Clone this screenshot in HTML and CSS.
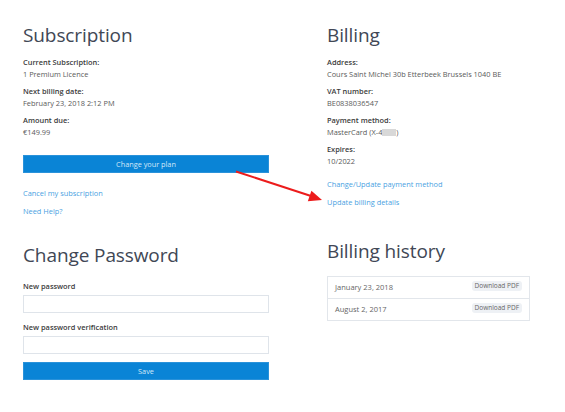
FILE: index.html
```html
<!DOCTYPE html>
<html lang="en">
<head>
    <meta charset="UTF-8">
    <meta name="viewport" content="width=device-width, initial-scale=1.0">
    <title>Account</title>
    <link rel="stylesheet" href="styles.css">
</head>
<body>

<div class="page">
    <div class="col col-left">
        <!-- Subscription -->
        <section class="block">
            <h2>Subscription</h2>
            <dl class="info">
                <div class="group">
                    <dt>Current Subscription:</dt>
                    <dd>1 Premium Licence</dd>
                </div>
                <div class="group">
                    <dt>Next billing date:</dt>
                    <dd>February 23, 2018 2:12 PM</dd>
                </div>
                <div class="group">
                    <dt>Amount due:</dt>
                    <dd>€149.99</dd>
                </div>
            </dl>
            <button class="btn btn-plan">Change your plan</button>
            <a href="#" class="link link-first">Cancel my subscription</a>
            <a href="#" class="link">Need Help?</a>
        </section>

        <!-- Change Password -->
        <section class="block password">
            <h2>Change Password</h2>
            <label for="newPassword" class="field-label">New password</label>
            <input type="password" id="newPassword" class="field">
            <label for="newPasswordCheck" class="field-label second">New password verification</label>
            <input type="password" id="newPasswordCheck" class="field">
            <button class="btn btn-save">Save</button>
        </section>
    </div>

    <div class="col col-right">
        <!-- Billing -->
        <section class="block">
            <h2>Billing</h2>
            <dl class="info">
                <div class="group">
                    <dt>Address:</dt>
                    <dd>Cours Saint Michel 30b Etterbeek Brussels 1040 BE</dd>
                </div>
                <div class="group">
                    <dt>VAT number:</dt>
                    <dd>BE0838036547</dd>
                </div>
                <div class="group">
                    <dt>Payment method:</dt>
                    <dd>MasterCard (X-4<span class="masked"></span>)</dd>
                </div>
                <div class="group">
                    <dt>Expires:</dt>
                    <dd>10/2022</dd>
                </div>
            </dl>
            <a href="#" class="link link-billing">Change/Update payment method</a>
            <a href="#" class="link">Update billing details</a>
        </section>

        <!-- Billing history -->
        <section class="block history">
            <h2>Billing history</h2>
            <div class="history-table">
                <div class="history-row">
                    <span>January 23, 2018</span>
                    <a href="#" class="badge">Download PDF</a>
                </div>
                <div class="history-row">
                    <span>August 2, 2017</span>
                    <a href="#" class="badge">Download PDF</a>
                </div>
            </div>
        </section>
    </div>

    <!-- annotation arrow -->
    <svg class="arrow" width="565" height="412" viewBox="0 0 565 412">
        <line x1="236" y1="171.5" x2="311" y2="196" stroke="#ec1c1c" stroke-width="2"/>
        <polygon points="322,200 307.8,201.2 311.4,190.8" fill="#ec1c1c"/>
    </svg>
</div>

</body>
</html>
```

FILE: styles.css
```css
body {
    margin: 0;
    padding: 0;
    background-color: #fff;
    font-family: "Open Sans", "Liberation Sans", sans-serif;
    font-size: 7.4px;
    line-height: 12px;
    color: #555;
}
.page {
    position: relative;
    display: flex;
    gap: 58px;
    padding: 22.6px 0 0 23px;
    width: 565px;
    height: 412px;
    box-sizing: border-box;
}
.col-left {
    width: 246px;
}
.col-right {
    width: 203px;
}
h2 {
    margin: 0;
    font-size: 19px;
    line-height: 24px;
    font-weight: 400;
    color: #414755;
    letter-spacing: -0.1px;
}
.info {
    margin: 9px 0 0;
}
.group + .group {
    margin-top: 5px;
}
.info dt {
    font-weight: 600;
    color: #3b3b3b;
}
.info dd {
    margin: 0;
    color: #5a5a5a;
}
.masked {
    display: inline-block;
    width: 14px;
    height: 7px;
    background-color: #d8d8d8;
    vertical-align: -1px;
}
.btn {
    display: block;
    width: 100%;
    height: 18px;
    padding: 0;
    border: 1px solid #2a92da;
    background-color: #0a84d6;
    color: #d3e8f8;
    font-family: inherit;
    font-size: 7.3px;
    cursor: pointer;
}
.btn-plan {
    margin-top: 17px;
}
.link {
    display: block;
    color: #4a9fe2;
    text-decoration: none;
    margin-top: 6px;
}
.link-first {
    margin-top: 14px;
}
.link-billing {
    margin-top: 11px;
}
.password {
    margin-top: 26px;
}
.field-label {
    display: block;
    margin-top: 13px;
    font-weight: 600;
    color: #3b3b3b;
}
.field-label.second {
    margin-top: 8px;
}
.field {
    display: block;
    width: 100%;
    height: 18px;
    margin-top: 3px;
    box-sizing: border-box;
    border: 1px solid #dfe4ea;
    background-color: #fff;
}
.btn-save {
    margin-top: 8px;
}
.history {
    margin-top: 31px;
}
.history-table {
    margin-top: 13px;
    border: 1px solid #e2e6eb;
}
.history-row {
    display: flex;
    justify-content: space-between;
    align-items: center;
    height: 21px;
    padding: 0 7px 0 7px;
    font-size: 7.5px;
    color: #666;
}
.history-row + .history-row {
    border-top: 1px solid #e2e6eb;
}
.badge {
    margin-top: -3px;
    padding: 0 3px;
    line-height: 10px;
    font-size: 6.5px;
    color: #666;
    background-color: #eef1f5;
    border-radius: 3px;
    text-decoration: none;
}
.arrow {
    position: absolute;
    top: 0;
    left: 0;
    pointer-events: none;
}
```
